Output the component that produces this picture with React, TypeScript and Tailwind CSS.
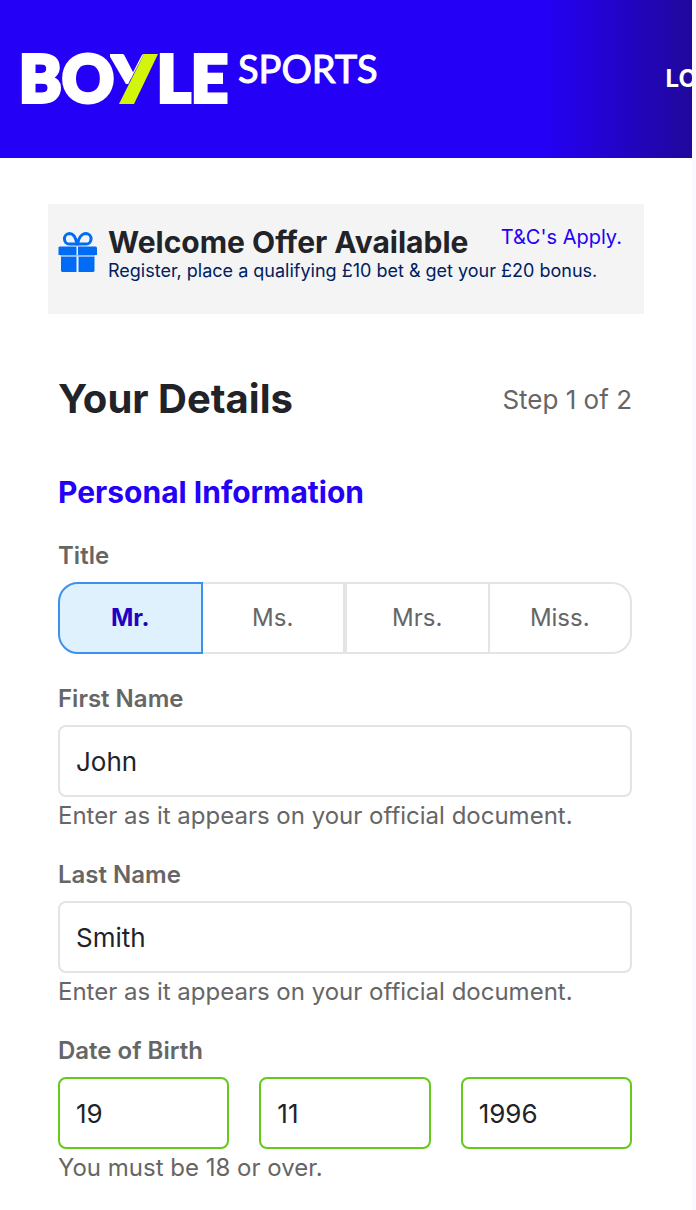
import React, { useState } from "react";

const TITLES = ["Mr.", "Ms.", "Mrs.", "Miss."];

const labelClass = "block text-2xl leading-8 font-semibold text-[#666666]";
const hintClass = "text-2xl leading-[38px] text-[#666666]";
const inputClass =
  "block h-18 w-full min-w-0 rounded-lg border-2 bg-white px-4 text-[26px] text-[#212329] outline-none";

function Logo() {
  return (
    <svg
      viewBox="0 -20 380 96"
      className="h-24 w-[380px] shrink-0"
      role="img"
      aria-label="BoyleSports"
      fontFamily="Lato, sans-serif"
      fill="#ffffff"
      stroke="#ffffff"
      strokeLinejoin="miter"
    >
      <defs>
        <clipPath id="y-arm">
          <polygon points="89,3 104,3 111,16 117,3 123,3 107,33 89,33" />
        </clipPath>
      </defs>
      <g fontSize="64" fontWeight="900" strokeWidth="4">
        <text x="-2" y="51">
          B
        </text>
        <text x="41" y="51">
          O
        </text>
        <text x="91" y="51" clipPath="url(#y-arm)">
          Y
        </text>
        <text x="136" y="51">
          L
        </text>
        <text x="170" y="51">
          E
        </text>
      </g>
      <polygon points="123,3 137,3 113,53 98,53" fill="#d2f50a" stroke="none" />
      <text x="217" y="32" fontSize="38" fontWeight="400" strokeWidth="1">
        SPORTS
      </text>
    </svg>
  );
}

function GiftIcon() {
  return (
    <svg viewBox="0 0 40 42" className="h-[42px] w-10 shrink-0" aria-hidden="true">
      <g fill="none" stroke="#006cf5" strokeWidth="3">
        <path d="M19 14H11.500C5 14 4.500 4 11.500 3.500C16 3.500 18 8.500 19 14Z" />
        <path d="M19.500 14H28C34.500 14 35 4 28 3.500C23.500 3.500 20.500 8.500 19.500 14Z" />
      </g>
      <g fill="#006cf5">
        <path d="M1.500 16.500H18.500V25H0.500V17.500Z" />
        <path d="M20 16.500H38L39 17.500V25H20Z" />
        <path d="M3 26.500H18.500V42H4L3 41Z" />
        <path d="M20.500 26.500H36.500V41L35.500 42H20.500Z" />
      </g>
      <path d="M2.500 25.700H37" stroke="#8db9f8" strokeWidth="1.500" />
    </svg>
  );
}

interface NameFieldProps {
  id: string;
  label: string;
  initial: string;
}

function NameField({ id, label, initial }: NameFieldProps) {
  const [value, setValue] = useState(initial);

  return (
    <div>
      <label htmlFor={id} className={labelClass}>
        {label}
      </label>
      <input
        id={id}
        type="text"
        value={value}
        onChange={(e) => setValue(e.target.value)}
        className={`${inputClass} mt-2.5 border-[#e4e4e4]`}
      />
      <p className={hintClass}>Enter as it appears on your official document.</p>
    </div>
  );
}

export default function App() {
  const [title, setTitle] = useState("Mr.");
  const [dob, setDob] = useState({ Day: "19", Month: "11", Year: "1996" });

  return (
    <div className="min-h-screen overflow-x-hidden bg-[#f9f9ff] pr-1 font-[Inter,sans-serif]">
      <div className="min-h-screen bg-white">
        <header className="flex h-[158px] items-center overflow-hidden bg-[linear-gradient(to_right,#2400f7_78%,#20089b_100%)] pl-[21px]">
          <Logo />
          <a
            href="#login"
            className="-mr-12 ml-auto shrink-0 text-2xl font-bold text-white"
          >
            LOGIN
          </a>
        </header>

        <main className="px-12 pt-[46px]">
          {/* Offer banner */}
          <section className="flex h-[110px] items-start bg-[#f4f4f4] px-2.5 pt-[22px]">
            <div className="pt-1">
              <GiftIcon />
            </div>
            <div className="ml-2.5 min-w-0 flex-1">
              <div className="flex items-start justify-between pr-3">
                <h2 className="text-[30px] leading-8 font-bold whitespace-nowrap text-[#212329]">
                  Welcome Offer Available
                </h2>
                <a
                  href="#terms"
                  className="text-xl leading-[22px] whitespace-nowrap text-[#2400f7]"
                >
                  T&amp;C's Apply.
                </a>
              </div>
              <p className="text-lg leading-[26px] whitespace-nowrap text-[#00205f]">
                Register, place a qualifying £10 bet &amp; get your £20 bonus.
              </p>
            </div>
          </section>

          <form className="px-2.5 pt-15 pb-6">
            <div className="flex items-center justify-between pr-0.5">
              <h1 className="text-[40px] leading-[50px] font-bold text-[#212329]">
                Your Details
              </h1>
              <span className="text-[26px] text-[#666666]">Step 1 of 2</span>
            </div>

            <h2 className="mt-12 text-3xl leading-10 font-bold text-[#2400f7]">
              Personal Information
            </h2>

            <fieldset className="mt-7 pr-0.5">
              <legend className={labelClass}>Title</legend>
              <div className="mt-2.5 flex">
                {TITLES.map((t) => (
                  <label
                    key={t}
                    className="flex h-18 flex-1 cursor-pointer items-center justify-center border-y-2 border-r-2 border-[#e4e4e4] text-2xl text-[#666666] first:rounded-l-[20px] first:border-l-2 last:rounded-r-[20px] nth-3:border-l-2 has-checked:border-[#3c91f0] has-checked:bg-[#e0f1fe] has-checked:font-bold has-checked:text-[#2400c4]"
                  >
                    <input
                      type="radio"
                      name="title"
                      value={t}
                      checked={title === t}
                      onChange={() => setTitle(t)}
                      className="sr-only"
                    />
                    {t}
                  </label>
                ))}
              </div>
            </fieldset>

            <div className="mt-[29px] flex flex-col gap-6 pr-0.5">
              <NameField id="first-name" label="First Name" initial="John" />
              <NameField id="last-name" label="Last Name" initial="Smith" />

              <fieldset>
                <legend className={labelClass}>Date of Birth</legend>
                <div className="mt-2.5 grid grid-cols-3 gap-[30px]">
                  {(["Day", "Month", "Year"] as const).map((part) => (
                    <input
                      key={part}
                      type="text"
                      inputMode="numeric"
                      aria-label={part}
                      value={dob[part]}
                      onChange={(e) => setDob({ ...dob, [part]: e.target.value })}
                      className={`${inputClass} border-[#65ca1c]`}
                    />
                  ))}
                </div>
                <p className={hintClass}>You must be 18 or over.</p>
              </fieldset>
            </div>
          </form>
        </main>
      </div>
    </div>
  );
}
